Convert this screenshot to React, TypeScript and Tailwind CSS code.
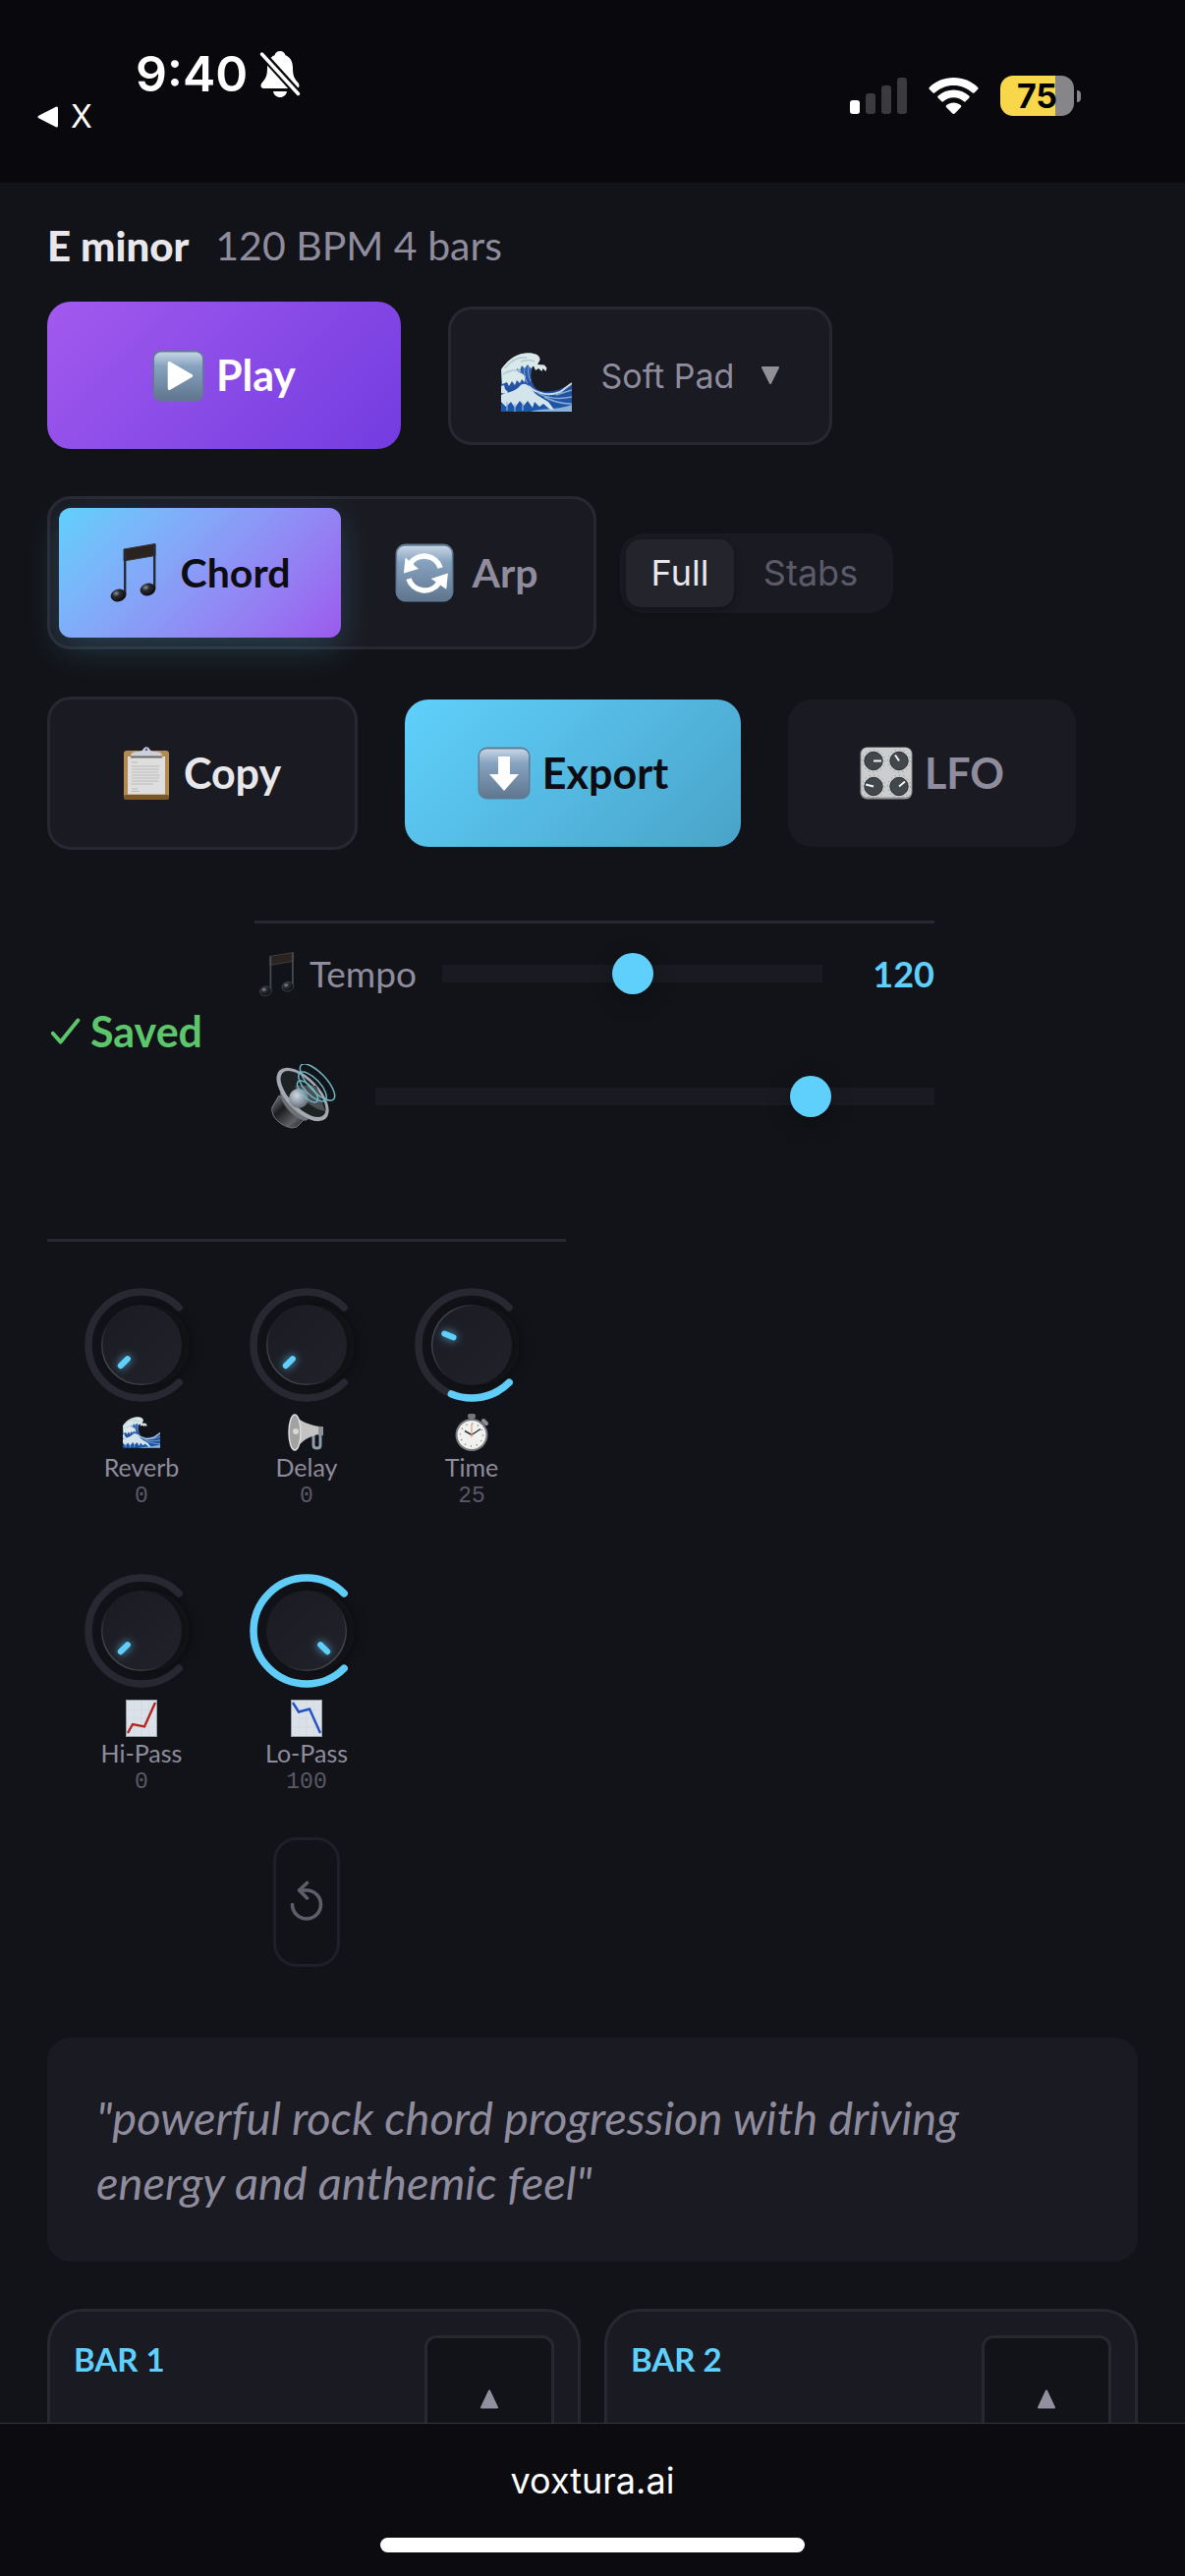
import { useState } from "react";
import type { ReactNode } from "react";

const GEO = "font-['Lato','Open_Sans',sans-serif]";
const SYS = "font-['Inter','Liberation_Sans',sans-serif]";

/* ---------- status bar icons ---------- */

function BellOff() {
  return (
    <svg viewBox="0 0 42 48" className="h-12 w-[42px]" aria-hidden="true">
      <g fill="#fff">
        <path d="M21 1c-3 0-5 1.800-5.500 4.300C10.500 7.300 8 12 8 18c0 8-1.500 11-5.200 15C.5 35.700 1.300 39 4.500 39h33c3.200 0 4-3.300 1.700-6C35.500 29 34 26 34 18c0-6-2.500-10.700-7.500-12.700C26 2.800 24 1 21 1z" />
        <path d="M14 42h14c-.6 3.600-3.300 6-7 6s-6.400-2.400-7-6z" />
      </g>
      <path d="M1 2 40 45" stroke="#09090d" strokeWidth="8" />
      <path d="M2.500 4 39.500 44.500" stroke="#fff" strokeWidth="3.500" strokeLinecap="round" />
    </svg>
  );
}

function Signal() {
  return (
    <svg viewBox="0 0 58 37" className="h-[37px] w-[58px]" aria-hidden="true">
      <rect x="0" y="23" width="10" height="14" rx="3" fill="#fff" />
      <rect x="16" y="16" width="10" height="21" rx="3" fill="#3b3b3d" />
      <rect x="32" y="8" width="10" height="29" rx="3" fill="#3b3b3d" />
      <rect x="48" y="0" width="10" height="37" rx="3" fill="#3b3b3d" />
    </svg>
  );
}

function Wifi() {
  return (
    <svg viewBox="0 0 51 37" className="h-[37px] w-[51px]" aria-hidden="true">
      <g fill="#fff">
        <path d="M25.500 0C16 0 7 3.700 1 9.700c-.8.800-.8 1.600 0 2.400l3.200 3.200c.7.700 1.500.7 2.300 0C11.600 10.600 18.300 8 25.500 8s13.900 2.600 19 7.300c.8.700 1.600.7 2.300 0l3.200-3.200c.8-.8.8-1.600 0-2.400C44 3.700 35 0 25.500 0z" />
        <path d="M25.500 12.500c-6 0-11.500 2.200-15.700 6-.8.800-.8 1.500 0 2.300l3.300 3.300c.7.700 1.400.7 2.200 0 2.800-2.500 6.300-3.900 10.200-3.900s7.400 1.400 10.200 3.900c.8.700 1.500.7 2.200 0l3.300-3.300c.8-.8.8-1.500 0-2.300-4.200-3.800-9.700-6-15.700-6z" />
        <path d="M25.500 25.500c-2.700 0-5.200.9-7.200 2.500-.8.700-.8 1.500-.1 2.200l6.100 6.200c.8.800 1.600.8 2.400 0l6.100-6.200c.7-.7.7-1.500-.1-2.200-2-1.600-4.500-2.500-7.200-2.500z" />
      </g>
    </svg>
  );
}

/* ---------- pictographs ---------- */

type IconProps = { className: string };

function KeyTile({ className, id, children }: IconProps & { id: string; children: ReactNode }) {
  return (
    <svg viewBox="0 0 54 54" className={className} aria-hidden="true">
      <defs>
        <linearGradient id={id} x1="0" y1="0" x2="0" y2="1">
          <stop offset="0" stopColor="#c6d5e4" />
          <stop offset="0.3" stopColor="#86a2bf" />
          <stop offset="1" stopColor="#61768f" />
        </linearGradient>
      </defs>
      <rect x="0.500" y="0.500" width="53" height="53" rx="9" fill="#617a94" />
      <rect x="2" y="2.500" width="50" height="49.500" rx="7" fill={`url(#${id})`} />
      {children}
    </svg>
  );
}

function PlayTile({ className }: IconProps) {
  return (
    <KeyTile className={className} id="tile-play">
      <path d="M16 14v26c0 1.500 1.300 2.200 2.600 1.400L41 28.500c1.300-.8 1.300-2.200 0-3L18.600 12.600C17.300 11.800 16 12.500 16 14z" fill="#fff" />
    </KeyTile>
  );
}

function DownTile({ className }: IconProps) {
  return (
    <KeyTile className={className} id="tile-down">
      <path d="M21 10h12v18h9L27 45 12 28h9z" fill="#fff" />
    </KeyTile>
  );
}

function CycleTile({ className }: IconProps) {
  return (
    <KeyTile className={className} id="tile-cycle">
      <g fill="none" stroke="#fff" strokeWidth="5">
        <path d="M41.500 22.500A15.500 15.500 0 0 0 14 18.500" />
        <path d="M12.500 32.500A15.500 15.500 0 0 0 40 36.500" />
      </g>
      <path d="M8 27.500 9.500 13l12 10.500z" fill="#fff" />
      <path d="M48.500 27.500 47 42 33 32.500z" fill="#fff" />
    </KeyTile>
  );
}

function Notes({ className, id, dim }: IconProps & { id: string; dim?: boolean }) {
  return (
    <svg viewBox="0 0 48 60" className={className} aria-hidden="true">
      <defs>
        <radialGradient id={id} cx="0.400" cy="0.300" r="0.700">
          <stop offset="0" stopColor="#8c949c" />
          <stop offset="0.350" stopColor="#2a2c30" />
          <stop offset="1" stopColor="#0a0a0c" />
        </radialGradient>
      </defs>
      <path d="M14 6 46 0.500v12L14 18z" fill="#2b2322" stroke={dim ? "#4b4647" : "#3c3432"} />
      <path d="M15.200 6v46M45.200 1v45" stroke={dim ? "#424a52" : "#252b34"} strokeWidth="2.400" />
      <ellipse cx="8.500" cy="53" rx="8" ry="6.300" transform="rotate(-15 8.500 53)" fill={`url(#${id})`} stroke={dim ? "#444b52" : "none"} />
      <ellipse cx="38.500" cy="47" rx="8" ry="6.300" transform="rotate(-15 38.500 47)" fill={`url(#${id})`} stroke={dim ? "#444b52" : "none"} />
    </svg>
  );
}

function Wave({ className, id }: IconProps & { id: string }) {
  return (
    <svg viewBox="0 0 72 60" className={className} aria-hidden="true">
      <defs>
        <linearGradient id={id} x1="0" y1="0" x2="0" y2="1">
          <stop offset="0" stopColor="#3a6ab4" />
          <stop offset="0.600" stopColor="#2450a0" />
          <stop offset="1" stopColor="#1b57ac" />
        </linearGradient>
      </defs>
      <path d="M0 18C6 9 15 3 26 3c6 0 8 4 6 12-4 10 0 18 4 22 10 6 25 1 36-6v29H0z" fill={`url(#${id})`} />
      <path d="M0 17C5 10 12 2 24 0.500c8-1 16 1 15.500 7L37 12l7 .5 2.500 3-1 3.500-3-3-1 3-3.500-3-3 2-2-4.500-3 2.500-3-4-3 4-3-3-2 5-3-2c-1 3 2 4 5 5l4 3-1 6-3-3-2 4-3-3-2 5-3-4-3 5-2-4-5 2z" fill="#d9e9ea" />
      <path d="M4 16c6-8 14-12 22-11M2 22c6-4 12-5 18-3M20 9c5-2 10-2 14 0" fill="none" stroke="#b3c9d2" strokeWidth="1.500" />
      <path d="M0 34l3-1 1 4 3 3-2 2-5-1z" fill="#cfe2ea" />
      <path d="M0 43c6-3 14-3 19-9 2-2.500 5-3 8-1 4 3 6 8 11 11l10 6 6 8h-4l-7-6-4 3-5-5-2 6-5-7-4 5-4-5-5 7-4-6-5 5-5-5z" fill="#d3e4ea" />
      <path d="M28 34c9 9 22 10 32 6l12-9" fill="none" stroke="#c6dbe4" strokeWidth="2" />
      <path d="M36 40c8 6 22 8 36 5M44 45c9 5 18 7 28 7M72 38l-16 5" fill="none" stroke="#87a9cf" strokeWidth="1.500" />
      <path d="M30 60c12-4 26-1 42-7v7z" fill="#b9d7ea" opacity="0.700" />
      <path d="M6 50v9M14 52v8M22 51v8" stroke="#8fb4e0" strokeWidth="1.200" />
      <path d="M24 15c-1 7 0 12 3 16M28 14c-1 6 0 11 2 15" stroke="#7fa6dc" strokeWidth="1" fill="none" />
    </svg>
  );
}

function Clipboard({ className }: IconProps) {
  return (
    <svg viewBox="0 0 46 54" className={className} aria-hidden="true">
      <rect x="0" y="4" width="46" height="50" rx="3" fill="#b38a50" />
      <rect x="0" y="49" width="46" height="5" rx="2" fill="#795729" />
      <path d="M4 10h38v38.500H4z" fill="#dedede" />
      <path d="M8 16h6M8 20h28M8 23h28M8 26h27M8 29h29M8 32h28M8 35h27M8 38h22M8 43h6M8 45.500h8" stroke="#b9b9b9" strokeWidth="1.200" />
      <path d="M7 10c0-4 3-5 8-5 3 0 4-1 5-3a3.500 3.500 0 0 1 6 0c1 2 2 3 5 3 5 0 8 1 8 5z" fill="#ccd0db" />
      <path d="M7 10.500h32" stroke="#6d6a62" strokeWidth="2" />
      <circle cx="23" cy="3" r="1.300" fill="#5b6380" />
    </svg>
  );
}

function KnobsTile({ className }: IconProps) {
  const dials = [
    { x: 14, y: 14.5, dx: 8, dy: 0 },
    { x: 40, y: 14.5, dx: -4, dy: -6 },
    { x: 14, y: 40.5, dx: -8, dy: -2 },
    { x: 40, y: 40.5, dx: 6, dy: -5 },
  ];
  return (
    <svg viewBox="0 0 54 54" className={className} aria-hidden="true">
      <rect x="0.500" y="0.500" width="53" height="53" rx="7" fill="#8e9092" />
      <rect x="1.500" y="1" width="51" height="50.500" rx="6" fill="#cccdce" />
      {dials.map((d) => (
        <g key={`${d.x}-${d.y}`}>
          <circle cx={d.x} cy={d.y} r="11.500" fill="none" stroke="#85878a" strokeWidth="1" strokeDasharray="1 3.500" />
          <circle cx={d.x} cy={d.y} r="9.200" fill="#42474b" stroke="#2c3033" />
          <path d={`M${d.x} ${d.y}l${d.dx} ${d.dy}`} stroke="#f4f4f4" strokeWidth="2" />
        </g>
      ))}
    </svg>
  );
}

function Speaker({ className }: IconProps) {
  return (
    <svg viewBox="0 0 66 66" className={className} aria-hidden="true">
      <defs>
        <linearGradient id="spk-body" x1="0" y1="0" x2="1" y2="1">
          <stop offset="0" stopColor="#85888d" />
          <stop offset="0.350" stopColor="#1b1c1f" />
          <stop offset="0.700" stopColor="#5c5f63" />
          <stop offset="1" stopColor="#141517" />
        </linearGradient>
        <radialGradient id="spk-cap" cx="0.400" cy="0.350" r="0.700">
          <stop offset="0" stopColor="#cfd8e2" />
          <stop offset="1" stopColor="#5f6973" />
        </radialGradient>
      </defs>
      <path d="M8 32 1 44c-2 9 8 19 20 21l5-1 10-10z" fill="url(#spk-body)" stroke="#777a7f" />
      <path d="M9 30c2 12 12 24 26 28l6-4L12 22z" fill="#6e7176" />
      <ellipse cx="32" cy="31" rx="34" ry="17" transform="rotate(46 32 31)" fill="#a4a8b1" />
      <ellipse cx="32.500" cy="30.500" rx="30" ry="13.500" transform="rotate(46 32.500 30.500)" fill="#1f2224" />
      <path d="M24 22 46 22 55 48c-8-1-20-8-28-18z" fill="#4b4f53" />
      <circle cx="28" cy="35" r="10" fill="url(#spk-cap)" />
      <g fill="none" stroke="#6fb7c4" strokeWidth="1.500">
        <ellipse cx="37" cy="28" rx="14" ry="6" transform="rotate(47 37 28)" />
        <ellipse cx="42" cy="23" rx="19" ry="8" transform="rotate(47 42 23)" />
        <ellipse cx="47" cy="18.500" rx="24" ry="9" transform="rotate(47 47 18.500)" />
      </g>
    </svg>
  );
}

function Megaphone({ className }: IconProps) {
  return (
    <svg viewBox="0 0 38 38" className={className} aria-hidden="true">
      <path d="M26 19v13c0 4 7 4 7 0V17" fill="none" stroke="#8d9cab" strokeWidth="3" />
      <path d="M6 1c6 6 16 11 27 12v8C22 22 13 28 8 37z" fill="#c3c3c3" />
      <path d="M31 13h5v9h-5z" fill="#8d9296" />
      <ellipse cx="7" cy="19" rx="6" ry="18" fill="#a2a2a2" stroke="#dcdcdc" strokeWidth="1.500" />
      <circle cx="8" cy="18" r="3" fill="#d8d8d8" />
    </svg>
  );
}

function Stopwatch({ className }: IconProps) {
  return (
    <svg viewBox="0 0 38 38" className={className} aria-hidden="true">
      <rect x="15" y="0" width="8" height="5" rx="2" fill="#74777c" />
      <path d="m31 7 3 3" stroke="#8b8e93" strokeWidth="4" strokeLinecap="round" />
      <circle cx="19" cy="21.500" r="16.500" fill="#787c82" />
      <circle cx="19" cy="21.500" r="14.500" fill="#f1f1ef" />
      <circle cx="19" cy="21.500" r="11.500" fill="none" stroke="#777" strokeWidth="1.500" strokeDasharray="1 5.020" />
      <path d="M19 21.500 12 17.500M19 21.500l9-6" stroke="#333" strokeWidth="1.500" />
      <path d="M19 24V10" stroke="#e39a80" strokeWidth="1.200" />
    </svg>
  );
}

function ChartTile({ className, up }: IconProps & { up: boolean }) {
  return (
    <svg viewBox="0 0 38 38" className={className} aria-hidden="true">
      <rect x="3" y="0" width="32" height="38" fill="#98a0a8" />
      <rect x="4" y="1" width="30" height="36" fill="#dbe1e8" />
      <path d="M4 10.500h30M4 19h30M4 28h30M11.500 1v36M19 1v36M26.500 1v36" stroke="#d3d9e0" strokeWidth="0.700" />
      {up ? (
        <path d="m5 34 5-9 12 2.500L33 3" fill="none" stroke="#b3261f" strokeWidth="2.400" />
      ) : (
        <path d="m5 3 6 9.500 11-3L33 34" fill="none" stroke="#2154c2" strokeWidth="2.400" />
      )}
    </svg>
  );
}

/* ---------- controls ---------- */

const rangeStyle =
  "h-[42px] min-w-0 cursor-pointer appearance-none bg-transparent [&::-webkit-slider-runnable-track]:h-[18px] [&::-webkit-slider-runnable-track]:bg-[#1a1a22] [&::-webkit-slider-thumb]:-mt-3 [&::-webkit-slider-thumb]:size-[42px] [&::-webkit-slider-thumb]:appearance-none [&::-webkit-slider-thumb]:rounded-full [&::-webkit-slider-thumb]:bg-[#5fd0fc] [&::-webkit-slider-thumb]:shadow-[0_6px_24px_rgba(0,0,0,0.3)]";

function arc(from: number, to: number) {
  const p = (deg: number) => {
    const r = (deg * Math.PI) / 180;
    return `${60 + 54 * Math.cos(r)} ${60 + 54 * Math.sin(r)}`;
  };
  return `M${p(from)}A54 54 0 ${to - from > 180 ? 1 : 0} 1 ${p(to)}`;
}

function Knob({ id, label, initial, icon }: { id: string; label: string; initial: number; icon: ReactNode }) {
  const [value, setValue] = useState(initial);
  return (
    <div className="flex flex-col items-center">
      <div className="relative">
        <svg viewBox="0 0 120 120" className="size-[120px] overflow-visible" aria-hidden="true">
          <defs>
            <linearGradient id={`${id}-face`} x1="0" y1="0" x2="1" y2="1">
              <stop offset="0" stopColor="#1b1b23" />
              <stop offset="1" stopColor="#21212a" />
            </linearGradient>
            <linearGradient id={`${id}-rim`} x1="0" y1="0" x2="0" y2="1">
              <stop offset="0" stopColor="#fff" stopOpacity="0.180" />
              <stop offset="0.400" stopColor="#fff" stopOpacity="0" />
            </linearGradient>
            <filter id={`${id}-soft`} x="-50%" y="-50%" width="200%" height="200%">
              <feGaussianBlur stdDeviation="7" />
            </filter>
            <filter id={`${id}-glow`} x="40" y="10" width="40" height="50" filterUnits="userSpaceOnUse">
              <feGaussianBlur stdDeviation="4" />
            </filter>
          </defs>
          <circle cx="68" cy="60" r="41" fill="#0b0b0f" opacity="0.500" filter={`url(#${id}-soft)`} />
          <path d={arc(45, 315)} fill="none" stroke="#282832" strokeWidth="7.500" strokeLinecap="round" />
          {value > 0 && (
            <path d={arc(45, 45 + value * 2.7)} fill="none" stroke="#5fcdf7" strokeWidth="7.500" strokeLinecap="round" />
          )}
          <circle cx="60" cy="60" r="41" fill={`url(#${id}-face)`} />
          <g transform={`rotate(${-135 + value * 2.7} 60 60)`}>
            <circle cx="60" cy="60" r="40.300" fill="none" stroke={`url(#${id}-rim)`} strokeWidth="1.500" />
            <path d="M60 31v9" stroke="#5fd0fc" strokeOpacity="0.700" strokeWidth="7" strokeLinecap="round" filter={`url(#${id}-glow)`} />
            <path d="M60 30v10" stroke="#5fd0fc" strokeWidth="6" strokeLinecap="round" />
          </g>
        </svg>
        <input
          id={id}
          type="range"
          min={0}
          max={100}
          value={value}
          onChange={(e) => setValue(Number(e.target.value))}
          className="absolute inset-0 h-full w-full cursor-pointer opacity-0"
        />
      </div>
      <label htmlFor={id} className={`mt-[10px] flex flex-col items-center gap-[2px] text-[25px] leading-7 text-[#8f8c9d] ${GEO}`}>
        {icon}
        {label}
      </label>
      <output htmlFor={id} className="mt-[2px] font-['Liberation_Mono',monospace] text-[23px] leading-7 text-[#5a5867]">
        {value}
      </output>
    </div>
  );
}

function BarCard({ title }: { title: string }) {
  return (
    <article className="flex h-[420px] items-start justify-between rounded-[36px] border-3 border-[#282832] bg-[#1a1a22] px-6 pt-6">
      <h2 className={`pt-1 text-[33px] leading-10 font-bold text-[#5fd0fc] ${GEO}`}>{title}</h2>
      <button
        type="button"
        aria-label={`Move ${title} chord up`}
        className="flex h-[130px] w-[132px] items-center justify-center rounded-xl border-3 border-[#282832] bg-[#121318]"
      >
        <svg viewBox="0 0 20 20" className="size-5" aria-hidden="true">
          <path d="M10 1.500 18 18.500H2z" fill="#92909f" stroke="#92909f" strokeWidth="2" strokeLinejoin="round" />
        </svg>
      </button>
    </article>
  );
}

export default function App() {
  const [mode, setMode] = useState("chord");
  const [length, setLength] = useState("full");
  const [tempo, setTempo] = useState(120);
  const [volume, setVolume] = useState(80);

  const tab = (on: boolean) =>
    on
      ? "bg-[#24242d] text-[#e8e7ec] shadow-[0_3px_9px_rgba(0,0,0,0.3)]"
      : "text-[#5c5a69]";
  const modeTab = (on: boolean) =>
    on
      ? "bg-linear-135 from-[#5fd0fc] to-[#9b59ee] font-bold text-[#0c0c12] shadow-[0_12px_36px_rgba(95,208,252,0.2)]"
      : "font-bold text-[#8f8c9d]";

  return (
    <div className="flex h-screen flex-col overflow-hidden bg-[#121318]">
      <header className={`flex h-[186px] shrink-0 items-start justify-between bg-[#09090d] pr-[106px] pl-9 text-white ${SYS}`}>
        <div className="flex flex-col pt-[45px]">
          <div className="flex items-center gap-3 pl-[102px]">
            <time className="text-[50px] leading-[60px] font-semibold">9:40</time>
            <BellOff />
          </div>
          <a href="#back" className="flex items-center gap-3 text-[32px] leading-7">
            <svg viewBox="0 0 24 24" className="size-6" aria-hidden="true">
              <path d="M4 12 21.500 3v18z" fill="#fff" stroke="#fff" strokeWidth="3" strokeLinejoin="round" />
            </svg>
            X
          </a>
        </div>
        <div className="flex items-center pt-[77px]">
          <Signal />
          <span className="ml-[22px]">
            <Wifi />
          </span>
          <div className="ml-[22px] flex h-[41px] w-[75px] items-center justify-center rounded-[13px] bg-linear-to-r from-[#f8d74a] from-75% to-[#868588] to-75% text-[34px] font-bold text-black">
            75
          </div>
          <span className="ml-[3px] h-3 w-1 rounded-r-full bg-[#868588]" />
        </div>
      </header>

      <main className={`min-h-0 flex-1 overflow-hidden px-12 pt-[34px] ${GEO}`}>
        <div className="mb-[27px] flex h-[60px] items-center gap-[27px] leading-[60px]">
          <h1 className="text-[42px] font-black text-[#e8e7ec]">E minor</h1>
          <p className="text-[41px] text-[#8f8c9d]">120 BPM 4 bars</p>
        </div>

        <section className="flex flex-col items-start gap-12">
          <div className="flex items-center gap-12">
            <button
              type="button"
              className="flex h-[150px] w-[360px] items-center justify-center gap-3 rounded-3xl bg-linear-135 from-[#a259ee] to-[#733be0] text-[43px] font-bold text-white"
            >
              <PlayTile className="size-[53px]" />
              Play
            </button>
            <div className={`flex h-[141px] w-[391px] items-center justify-center rounded-3xl border-3 border-[#282832] bg-[#1a1a22] ${SYS}`}>
              <Wave className="mt-[14px] h-[60px] w-[72px]" id="wave-lg" />
              <select
                aria-label="Sound"
                defaultValue="Soft Pad"
                className="ml-[30px] h-[60px] w-[162px] cursor-pointer appearance-none bg-transparent text-[34px] text-[#8f8c9d]"
              >
                <option>Soft Pad</option>
                <option>Piano</option>
                <option>Strings</option>
              </select>
              <svg viewBox="0 0 20 20" className="size-5" aria-hidden="true">
                <path d="M2 2h16l-8 16z" fill="#929095" stroke="#929095" strokeWidth="2" strokeLinejoin="round" />
              </svg>
            </div>
          </div>

          <div className="flex items-center gap-6">
            <div className="flex h-[156px] rounded-3xl border-3 border-[#282832] bg-[#1a1a22] p-[9px]">
              <button
                type="button"
                aria-pressed={mode === "chord"}
                onClick={() => setMode("chord")}
                className={`flex w-[287px] items-center justify-center gap-6 rounded-xl text-[41px] ${modeTab(mode === "chord")}`}
              >
                <Notes className="h-[60px] w-12" id="notes-lg" />
                Chord
              </button>
              <button
                type="button"
                aria-pressed={mode === "arp"}
                onClick={() => setMode("arp")}
                className={`flex w-[248px] items-center justify-center gap-[18px] rounded-xl pl-2 text-[41px] ${modeTab(mode === "arp")}`}
              >
                <CycleTile className="size-[60px]" />
                Arp
              </button>
            </div>
            <div className={`flex h-[81px] rounded-3xl bg-[#1a1a22] p-[6px] text-[36px] ${SYS}`}>
              <button
                type="button"
                aria-pressed={length === "full"}
                onClick={() => setLength("full")}
                className={`w-[110px] rounded-[15px] ${tab(length === "full")}`}
              >
                Full
              </button>
              <button
                type="button"
                aria-pressed={length === "stabs"}
                onClick={() => setLength("stabs")}
                className={`w-[156px] rounded-[15px] ${tab(length === "stabs")}`}
              >
                Stabs
              </button>
            </div>
          </div>

          <div className="flex items-center gap-12 text-[43px] font-bold">
            <button
              type="button"
              className="flex h-[156px] w-[316px] items-center justify-center gap-[15px] rounded-3xl border-3 border-[#282832] bg-[#1a1a22] text-[#e8e7ec]"
            >
              <Clipboard className="h-[54px] w-[46px]" />
              Copy
            </button>
            <button
              type="button"
              className="flex h-[150px] w-[342px] items-center justify-center gap-3 rounded-3xl bg-linear-135 from-[#5fd0fc] to-[#4aa3c8] text-[#0c0c12]"
            >
              <DownTile className="size-[54px]" />
              Export
            </button>
            <button
              type="button"
              className="flex h-[150px] w-[293px] items-center justify-center gap-3 rounded-3xl bg-[#1a1a22] text-[#8f8c9d]"
            >
              <KnobsTile className="size-[54px]" />
              LFO
            </button>
          </div>

          <div className="flex w-full items-center gap-12">
            <p className="flex w-[163px] shrink-0 items-center gap-[10px] text-[43px] font-bold text-[#5dc56b]">
              <svg viewBox="0 0 34 32" className="ml-1 h-8 w-[30px] shrink-0" aria-hidden="true">
                <path d="M2 18 11 28 31 3" fill="none" stroke="#5dc56b" strokeWidth="4.500" strokeLinecap="round" strokeLinejoin="round" />
              </svg>
              Saved
            </p>
            <div className="mt-6 max-w-[692px] flex-1 border-t-3 border-[#282832] pt-[21px] pb-[41px]">
              <div className="flex h-[60px] items-center gap-6">
                <label htmlFor="tempo" className="flex w-[167px] items-center gap-[15px] pl-[5px] text-[37px] text-[#8f8c9d]">
                  <Notes className="h-[45px] w-9" id="notes-sm" dim />
                  Tempo
                </label>
                <input
                  id="tempo"
                  type="range"
                  min={40}
                  max={200}
                  value={tempo}
                  onChange={(e) => setTempo(Number(e.target.value))}
                  className={`flex-1 ${rangeStyle}`}
                />
                <output htmlFor="tempo" className="w-[90px] text-right text-[36px] font-bold text-[#5fd0fc]">
                  {tempo}
                </output>
              </div>
              <div className="mt-[65px] flex h-[60px] items-center gap-6">
                <label htmlFor="volume" className="flex w-[99px] justify-center">
                  <Speaker className="h-[66px] w-[68px]" />
                </label>
                <input
                  id="volume"
                  aria-label="Volume"
                  type="range"
                  min={0}
                  max={100}
                  value={volume}
                  onChange={(e) => setVolume(Number(e.target.value))}
                  className={`flex-1 ${rangeStyle}`}
                />
              </div>
            </div>
          </div>
        </section>

        <section className="mt-[74px] w-[528px] border-t-3 border-[#282832] px-9 pt-[45px]">
          <div className="grid grid-cols-3 gap-x-12 gap-y-[63px]">
            <Knob id="reverb" label="Reverb" initial={0} icon={<Wave className="size-[38px]" id="wave-sm" />} />
            <Knob id="delay" label="Delay" initial={0} icon={<Megaphone className="size-[38px]" />} />
            <Knob id="time" label="Time" initial={25} icon={<Stopwatch className="size-[38px]" />} />
            <Knob id="hipass" label="Hi-Pass" initial={0} icon={<ChartTile className="size-[38px]" up />} />
            <Knob id="lopass" label="Lo-Pass" initial={100} icon={<ChartTile className="size-[38px]" up={false} />} />
          </div>
          <button
            type="button"
            aria-label="Reset effects"
            className="mx-auto mt-[42px] flex h-[132px] w-[68px] items-center justify-center rounded-3xl border-3 border-[#1f1f29]"
          >
            <svg viewBox="0 0 36 44" className="h-11 w-9" aria-hidden="true" fill="none" stroke="#5f5d69" strokeWidth="3.600" strokeLinecap="round" strokeLinejoin="round">
              <path d="M3.500 24.500A14.500 14.500 0 1 0 18 10H11" />
              <path d="M18.500 2.500 10.500 10l8 8" />
            </svg>
          </button>
        </section>

        <blockquote className="mt-[72px] rounded-3xl bg-[#1a1a22] py-12 pr-[72px] pl-[50px] text-[47px] leading-[66px] text-[#8f8c9d] italic">
          "powerful rock chord progression with driving energy and anthemic feel"
        </blockquote>

        <section className="mt-12 grid grid-cols-2 gap-6">
          <BarCard title="BAR 1" />
          <BarCard title="BAR 2" />
        </section>
      </main>

      <footer className={`flex h-[156px] shrink-0 flex-col items-center justify-between border-t border-[#37373b] bg-[#0c0b10] pt-9 pb-6 text-white ${SYS}`}>
        <a href="#voxtura" className="text-[36px] leading-[44px]">
          voxtura.ai
        </a>
        <span className="h-[15px] w-[432px] rounded-full bg-white" />
      </footer>
    </div>
  );
}
